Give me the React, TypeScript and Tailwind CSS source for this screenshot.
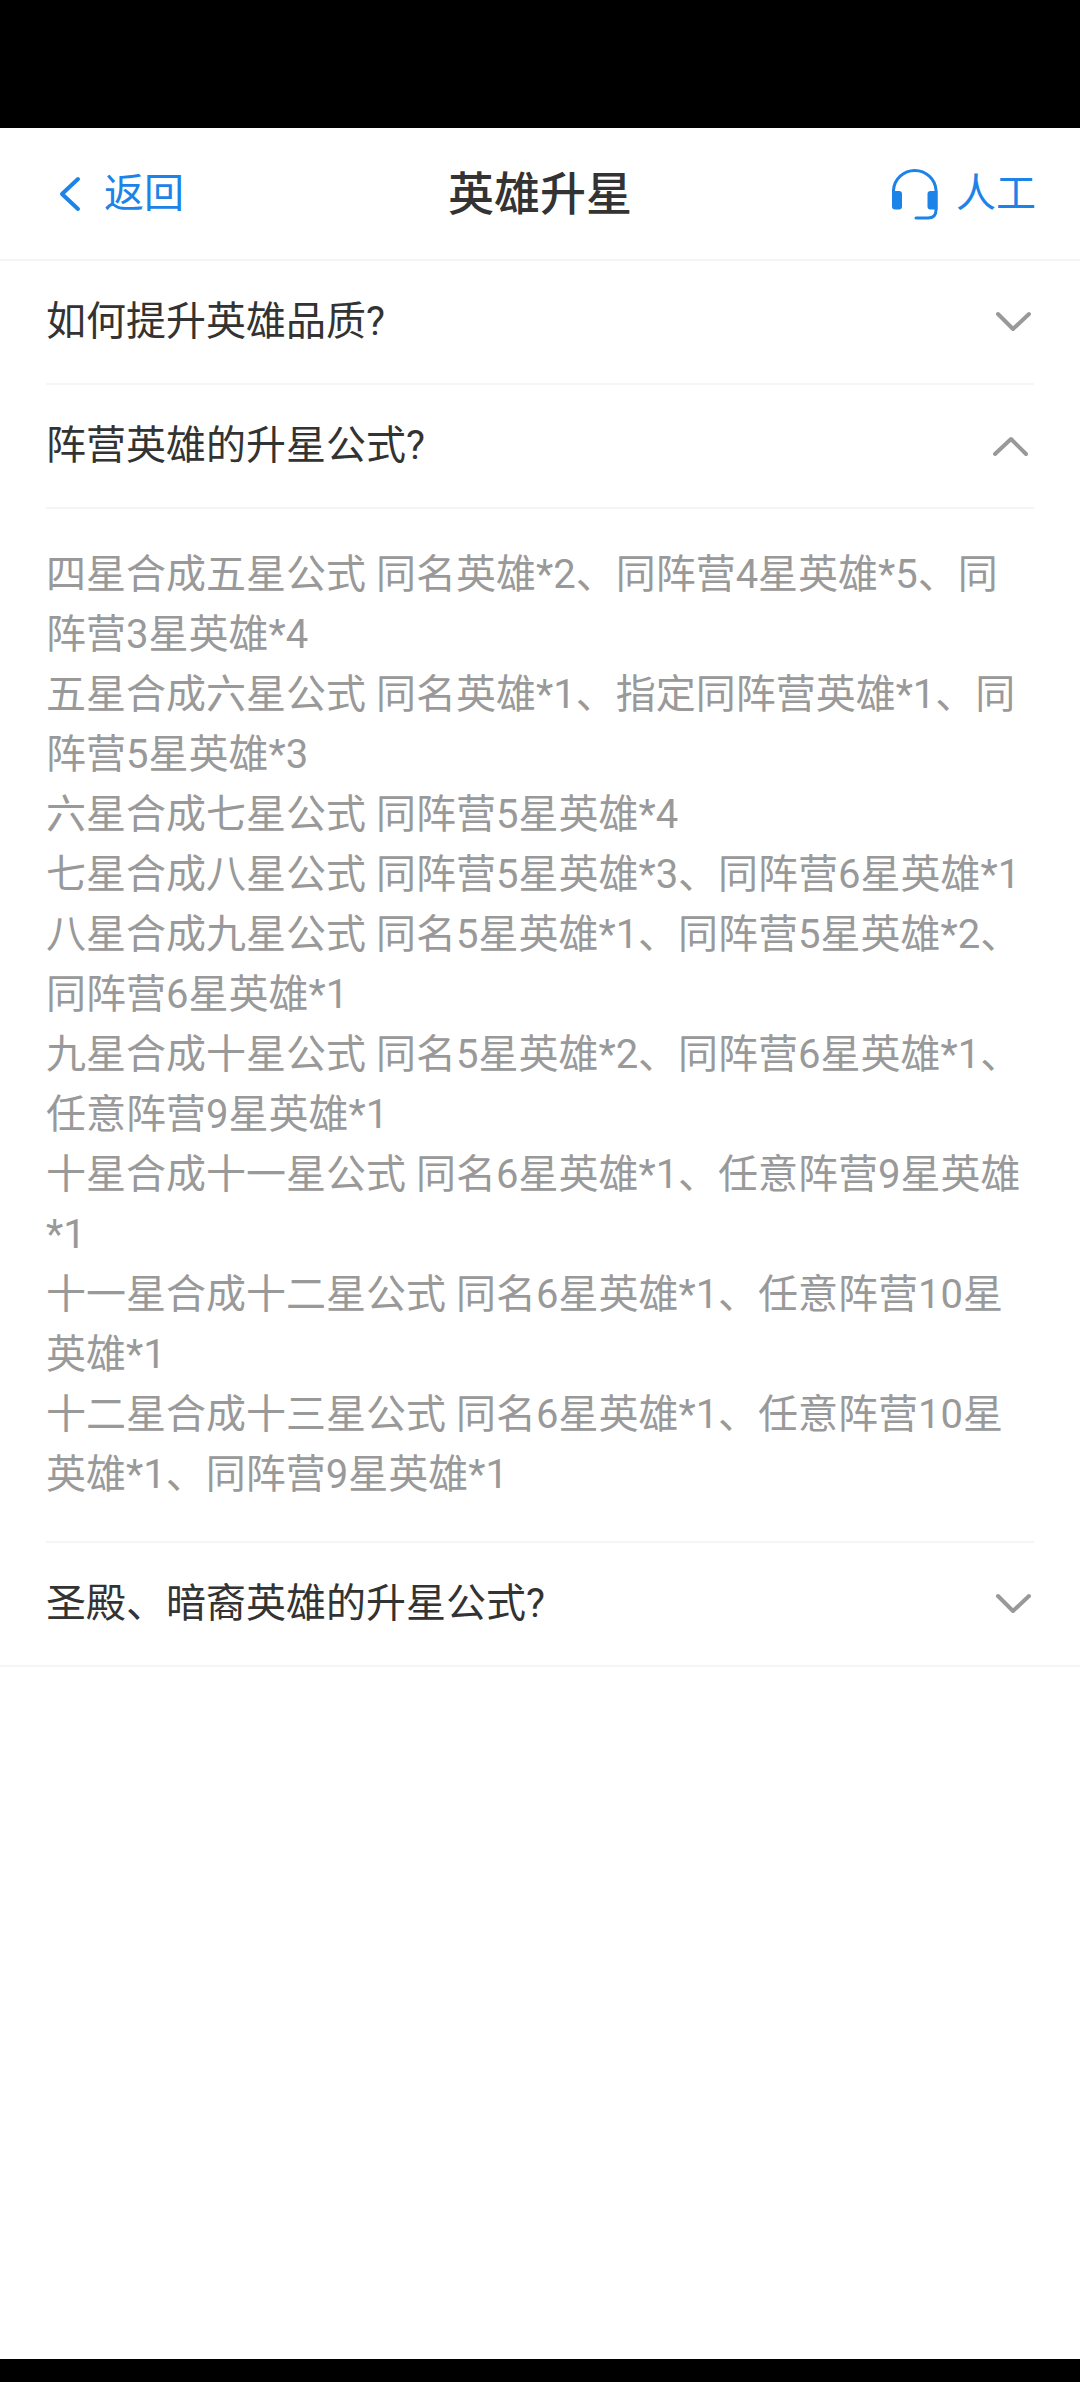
import { useState } from "react";

type Entry = { question: string; answer: string[] };

const entries: Entry[] = [
  { question: "如何提升英雄品质?", answer: [] },
  {
    question: "阵营英雄的升星公式?",
    answer: [
      "四星合成五星公式 同名英雄*2、同阵营4星英雄*5、同阵营3星英雄*4",
      "五星合成六星公式 同名英雄*1、指定同阵营英雄*1、同阵营5星英雄*3",
      "六星合成七星公式 同阵营5星英雄*4",
      "七星合成八星公式 同阵营5星英雄*3、同阵营6星英雄*1",
      "八星合成九星公式 同名5星英雄*1、同阵营5星英雄*2、同阵营6星英雄*1",
      "九星合成十星公式 同名5星英雄*2、同阵营6星英雄*1、任意阵营9星英雄*1",
      "十星合成十一星公式 同名6星英雄*1、任意阵营9星英雄*1",
      "十一星合成十二星公式 同名6星英雄*1、任意阵营10星英雄*1",
      "十二星合成十三星公式 同名6星英雄*1、任意阵营10星英雄*1、同阵营9星英雄*1",
    ],
  },
  { question: "圣殿、暗裔英雄的升星公式?", answer: [] },
];

function BackIcon() {
  return (
    <svg className="h-9 w-6" viewBox="0 0 24 36" fill="none" stroke="currentColor" strokeWidth="4" strokeLinecap="round" strokeLinejoin="round" aria-hidden="true">
      <path d="M20 3 L4 18 L20 33" />
    </svg>
  );
}

function HeadsetIcon() {
  return (
    <svg className="h-[52px] w-[46px]" viewBox="0 0 46 52" fill="none" aria-hidden="true">
      <path d="M1.5 25 V22 A21.3 21 0 0 1 44 22 V42 Q44 50 36 50 H24" stroke="currentColor" strokeWidth="3" strokeLinecap="round" />
      <path d="M0 23 H7 Q10 23 10 26 V38.500 Q10 41.500 7 41.500 H3 Q0 41.500 0 38.500 Z" fill="currentColor" />
      <path d="M45.500 23 H38.500 Q35.500 23 35.500 26 V38.500 Q35.500 41.500 38.500 41.500 H45.500 Z" fill="currentColor" />
    </svg>
  );
}

function Chevron({ open }: { open: boolean }) {
  return (
    <svg className={open ? "size-11 shrink-0 rotate-180" : "size-11 shrink-0"} viewBox="0 0 44 44" fill="none" stroke="#999999" strokeWidth="4" strokeLinecap="round" strokeLinejoin="round" aria-hidden="true">
      <path d="M8 14 L23 29 L39 14" />
    </svg>
  );
}

export default function App() {
  const [openIndex, setOpenIndex] = useState(1);

  return (
    <div className="flex min-h-screen flex-col bg-white font-[Roboto,'Noto_Sans_CJK_SC',sans-serif] text-[40px] leading-[60px] text-[#333333]">
      <div className="h-32 bg-black" />
      <header className="grid grid-cols-[1fr_auto_1fr] items-center border-b-2 border-[#f5f5f5] px-11 pt-9 pb-[35px]">
        <button type="button" className="flex items-center gap-[22px] justify-self-start pl-3.5 text-[#1c83e8]">
          <BackIcon />
          返回
        </button>
        <h1 className="text-[46px] font-medium">英雄升星</h1>
        <button type="button" className="flex items-center gap-[18px] justify-self-end text-[#1c83e8]">
          <HeadsetIcon />
          人工
        </button>
      </header>
      <main className="grow">
        <ul className="border-b-2 border-[#f5f5f5]">
          {entries.map((entry, index) => {
            const open = index === openIndex && entry.answer.length > 0;
            return (
              <li key={entry.question} className="mx-[46px] border-b-2 border-[#f5f5f5] last:border-b-0">
                <h2>
                  <button
                    type="button"
                    aria-expanded={open}
                    onClick={() => setOpenIndex(index === openIndex ? -1 : index)}
                    className="flex w-full items-center justify-between py-[31px] text-left"
                  >
                    {entry.question}
                    <Chevron open={open} />
                  </button>
                </h2>
                {open && (
                  <div className="border-t-2 border-[#f5f5f5] py-9 text-[#999999]">
                    {entry.answer.map((line) => (
                      <p key={line}>{line}</p>
                    ))}
                  </div>
                )}
              </li>
            );
          })}
        </ul>
      </main>
      <div className="h-[23px] bg-black" />
    </div>
  );
}
